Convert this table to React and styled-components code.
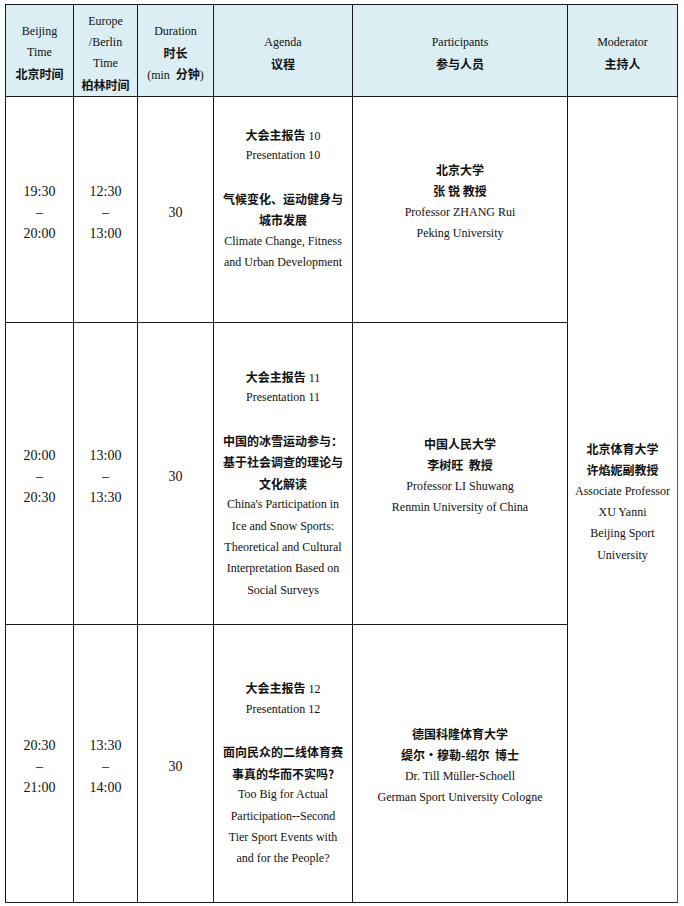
import React from 'react';
import styled, { createGlobalStyle } from 'styled-components';

const GlobalStyle = createGlobalStyle`
  html, body {
    margin: 0;
    padding: 0;
    background: #ffffff;
  }
  body {
    font-family: "Liberation Serif", "Noto Sans CJK SC", serif;
    color: #111111;
  }
`;

const Page = styled.div`
  padding: 4px 0 0 5px;
`;

const Table = styled.table`
  border-collapse: collapse;
  table-layout: fixed;
  width: 672px;
`;

const HeadRow = styled.tr`
  height: 92px;
`;

const BodyRow = styled.tr`
  height: ${(p) => p.h}px;
`;

const HeadCell = styled.th`
  background: #daeef3;
  border: 1px solid #1a1a1a;
  font-weight: normal;
  font-size: 12px;
  text-align: center;
  vertical-align: middle;
  padding: 4px 4px 0;
  white-space: pre;
`;

const Cell = styled.td`
  border: 1px solid #1a1a1a;
  text-align: center;
  vertical-align: middle;
  font-size: ${(p) => (p.big ? 14 : 12)}px;
  padding: ${(p) => (p.shift > 0 ? p.shift * 2 : 0)}px 4px
    ${(p) => (p.shift < 0 ? -p.shift * 2 : 0)}px;
  white-space: pre;
`;

const RightCell = styled(Cell)`
  border-right-color: #555555;
`;

const Line = styled.div`
  display: block;
  height: ${(p) => (p.big ? 21 : 21.4)}px;
  line-height: ${(p) => (p.big ? 21 : 21.4)}px;
`;

const HeadLine = styled.div`
  height: 21px;
  line-height: 21px;
`;

const Zh = styled.span`
  font-family: "Noto Sans CJK SC", sans-serif;
  font-weight: 700;
  font-size: 12px;
`;

function TimeSpan({ from, to }) {
  return (
    <>
      <Line big>{from}</Line>
      <Line big>–</Line>
      <Line big>{to}</Line>
    </>
  );
}

const sessions = [
  {
    h: 226,
    beijing: ['19:30', '20:00'],
    berlin: ['12:30', '13:00'],
    shift: -11,
    no: '10',
    zh: ['气候变化、运动健身与', '城市发展'],
    en: ['Climate Change, Fitness', 'and Urban Development'],
    pShift: -8,
    uni: '北京大学',
    name: '张 锐 教授',
    person: ['Professor ZHANG Rui', 'Peking University'],
  },
  {
    h: 302,
    beijing: ['20:00', '20:30'],
    berlin: ['13:00', '13:30'],
    shift: 10,
    no: '11',
    zh: ['中国的冰雪运动参与：', '基于社会调查的理论与', '文化解读'],
    en: [
      "China's Participation in",
      'Ice and Snow Sports:',
      'Theoretical and Cultural',
      'Interpretation Based on',
      'Social Surveys',
    ],
    pShift: 2,
    uni: '中国人民大学',
    name: '李树旺  教授',
    person: ['Professor LI Shuwang', 'Renmin University of China'],
  },
  {
    h: 278,
    beijing: ['20:30', '21:00'],
    berlin: ['13:30', '14:00'],
    shift: 10,
    no: '12',
    zh: ['面向民众的二线体育赛', '事真的华而不实吗?'],
    en: [
      'Too Big for Actual',
      'Participation--Second',
      'Tier Sport Events with',
      'and for the People?',
    ],
    pShift: 2,
    uni: '德国科隆体育大学',
    name: '缇尔·穆勒-绍尔  博士',
    person: ['Dr. Till Müller-Schoell', 'German Sport University Cologne'],
  },
];

export default function App() {
  return (
    <Page>
      <GlobalStyle />
      <Table>
        <colgroup>
          <col style={{ width: 68 }} />
          <col style={{ width: 64 }} />
          <col style={{ width: 76 }} />
          <col style={{ width: 139 }} />
          <col style={{ width: 215 }} />
          <col style={{ width: 110 }} />
        </colgroup>
        <thead>
          <HeadRow>
            <HeadCell>
              <HeadLine>Beijing</HeadLine>
              <HeadLine>Time</HeadLine>
              <HeadLine><Zh>北京时间</Zh></HeadLine>
            </HeadCell>
            <HeadCell>
              <HeadLine>Europe</HeadLine>
              <HeadLine>/Berlin</HeadLine>
              <HeadLine>Time</HeadLine>
              <HeadLine><Zh>柏林时间</Zh></HeadLine>
            </HeadCell>
            <HeadCell>
              <HeadLine>Duration</HeadLine>
              <HeadLine><Zh>时长</Zh></HeadLine>
              <HeadLine>(min  <Zh>分钟</Zh>)</HeadLine>
            </HeadCell>
            <HeadCell>
              <HeadLine>Agenda</HeadLine>
              <HeadLine><Zh>议程</Zh></HeadLine>
            </HeadCell>
            <HeadCell>
              <HeadLine>Participants</HeadLine>
              <HeadLine><Zh>参与人员</Zh></HeadLine>
            </HeadCell>
            <HeadCell>
              <HeadLine>Moderator</HeadLine>
              <HeadLine><Zh>主持人</Zh></HeadLine>
            </HeadCell>
          </HeadRow>
        </thead>
        <tbody>
          {sessions.map((s, i) => (
            <BodyRow key={s.no} h={s.h}>
              <Cell big shift={3}>
                <TimeSpan from={s.beijing[0]} to={s.beijing[1]} />
              </Cell>
              <Cell big shift={3}>
                <TimeSpan from={s.berlin[0]} to={s.berlin[1]} />
              </Cell>
              <Cell big shift={3}>
                <Line big>30</Line>
              </Cell>
              <Cell shift={s.shift}>
                <Line><Zh>大会主报告</Zh> {s.no}</Line>
                <Line>Presentation {s.no}</Line>
                <Line />
                {s.zh.map((t) => (
                  <Line key={t}><Zh>{t}</Zh></Line>
                ))}
                {s.en.map((t) => (
                  <Line key={t}>{t}</Line>
                ))}
              </Cell>
              <Cell shift={s.pShift}>
                <Line><Zh>{s.uni}</Zh></Line>
                <Line><Zh>{s.name}</Zh></Line>
                {s.person.map((t) => (
                  <Line key={t}>{t}</Line>
                ))}
              </Cell>
              {i === 0 && (
                <RightCell rowSpan={3} shift={2.5}>
                  <Line><Zh>北京体育大学</Zh></Line>
                  <Line><Zh>许焰妮副教授</Zh></Line>
                  <Line>Associate Professor</Line>
                  <Line>XU Yanni</Line>
                  <Line>Beijing Sport</Line>
                  <Line>University</Line>
                </RightCell>
              )}
            </BodyRow>
          ))}
        </tbody>
      </Table>
    </Page>
  );
}
